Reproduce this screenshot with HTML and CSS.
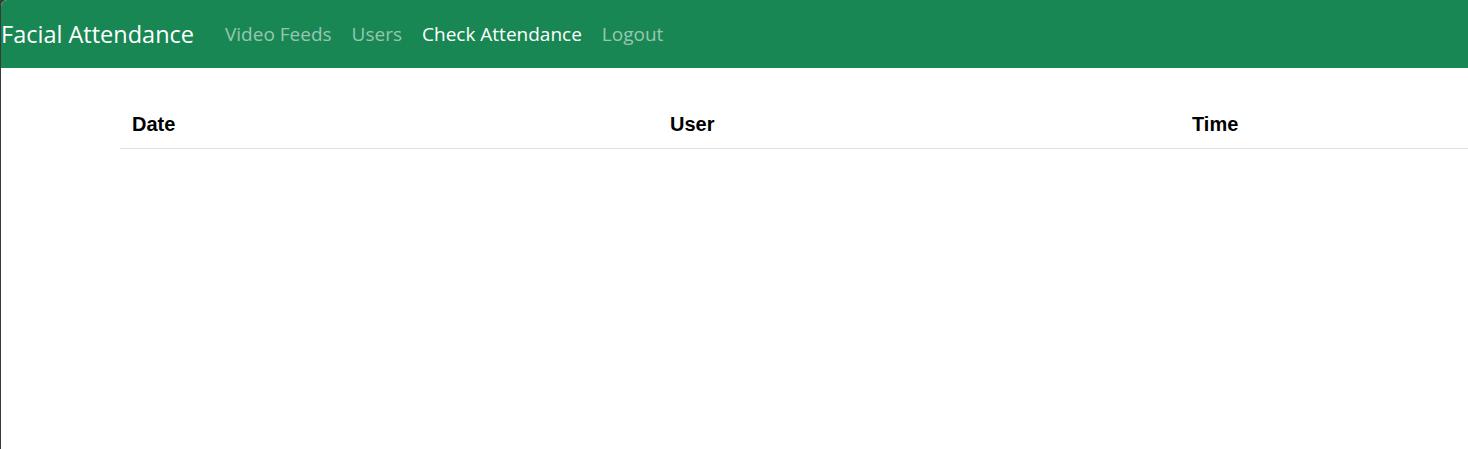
FILE: index.html
```html
<!DOCTYPE html>
<html lang="en">
<head>
<meta charset="utf-8">
<title>Facial Attendance</title>
<link rel="stylesheet" href="styles.css">
</head>
<body>
<div class="frame">
  <nav class="navbar">
    <a class="brand" href="#">Facial Attendance</a>
    <ul class="nav-links">
      <li><a class="nav-link" href="#">Video Feeds</a></li>
      <li><a class="nav-link" href="#">Users</a></li>
      <li><a class="nav-link active" href="#">Check Attendance</a></li>
      <li><a class="nav-link" href="#">Logout</a></li>
    </ul>
  </nav>
  <main class="content">
    <table class="table">
      <thead>
        <tr>
          <th class="col-date">Date</th>
          <th class="col-user">User</th>
          <th class="col-time">Time</th>
        </tr>
      </thead>
      <tbody></tbody>
    </table>
  </main>
</div>
</body>
</html>
```

FILE: styles.css
```css
* { box-sizing: border-box; }
html, body {
  margin: 0;
  padding: 0;
  height: 100%;
  background: #3a3a3a;
}
.frame {
  height: 100%;
  margin-left: 1px;
  background: #ffffff;
  border-top-left-radius: 6px;
  overflow: hidden;
}
.navbar {
  height: 68px;
  background: #198754;
  display: flex;
  align-items: center;
  padding-left: 0;
  font-family: "Open Sans", "Noto Sans", sans-serif;
}
.brand {
  color: #ffffff;
  text-decoration: none;
  font-size: 23.5px;
  margin-right: 21px;
}
.nav-links {
  list-style: none;
  margin: 0;
  padding: 0;
  display: flex;
}
.nav-link {
  display: block;
  padding: 0 10px;
  font-size: 19px;
  color: rgba(255, 255, 255, 0.55);
  text-decoration: none;
}
.nav-link.active { color: #ffffff; }
.content {
  padding: 30px 0 0 119px;
}
.table {
  width: 100%;
  border-collapse: collapse;
  font-family: "Liberation Sans", Arial, sans-serif;
}
.table th {
  text-align: left;
  font-weight: bold;
  font-size: 20px;
  line-height: 30px;
  padding: 11px 12px 9px;
  color: #000;
  border-bottom: 1px solid #dee2e6;
}
.col-date { width: 538px; }
.col-user { width: 522px; }
```
